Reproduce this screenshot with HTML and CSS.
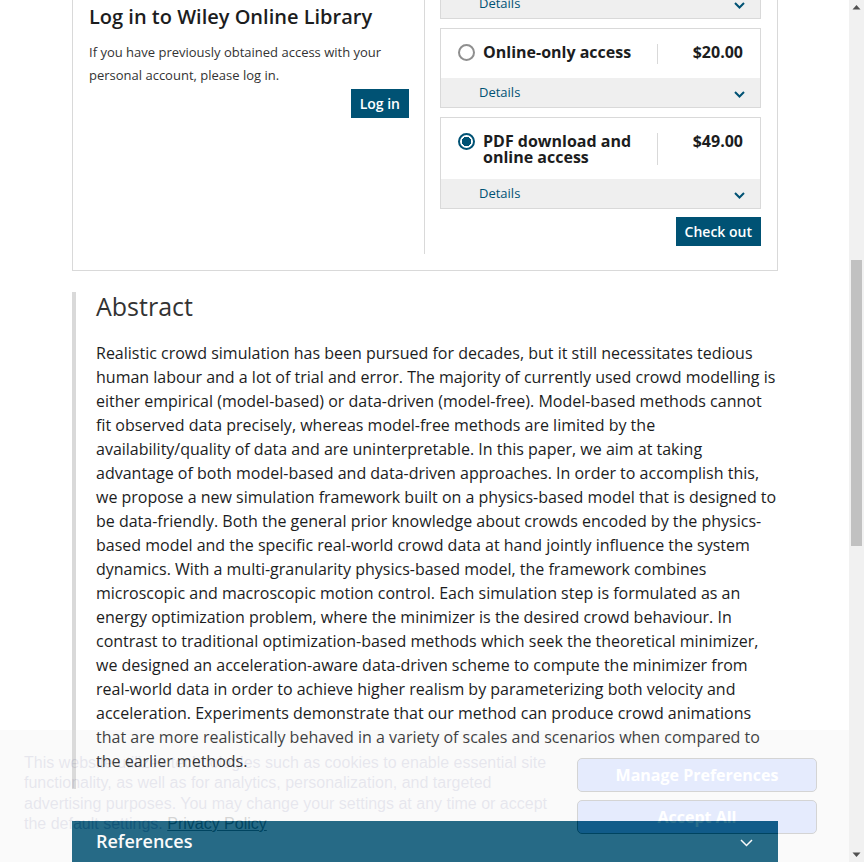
FILE: index.html
```html
<!DOCTYPE html>
<html lang="en">
<head>
<meta charset="utf-8">
<title>Wiley Online Library</title>
<link rel="stylesheet" href="styles.css">
</head>
<body>
<div class="window">
  <div class="viewport">
    <main class="main">
      <section class="access-card">
        <div class="login-col">
          <h2 class="login-title">Log in to Wiley Online Library</h2>
          <p class="login-text">If you have previously obtained access with your personal account, please log in.</p>
          <div class="actions"><button class="btn">Log in</button></div>
        </div>
        <div class="purchase-col">
          <div class="option">
            <div class="option-main">
              <span class="radio"></span>
              <span class="option-label">48-Hour online access</span>
              <span class="option-price">$12.00</span>
            </div>
            <div class="option-details">
              <span>Details</span>
              <svg class="chev" width="11" height="7" viewBox="0 0 11 7"><path d="M1 1 L5.5 5.5 L10 1" fill="none" stroke="#005274" stroke-width="2"/></svg>
            </div>
          </div>
          <div class="option">
            <div class="option-main">
              <span class="radio"></span>
              <span class="option-label">Online-only access</span>
              <span class="option-price">$20.00</span>
            </div>
            <div class="option-details">
              <span>Details</span>
              <svg class="chev" width="11" height="7" viewBox="0 0 11 7"><path d="M1 1 L5.5 5.5 L10 1" fill="none" stroke="#005274" stroke-width="2"/></svg>
            </div>
          </div>
          <div class="option">
            <div class="option-main">
              <span class="radio radio-checked"></span>
              <span class="option-label">PDF download and online access</span>
              <span class="option-price">$49.00</span>
            </div>
            <div class="option-details">
              <span>Details</span>
              <svg class="chev" width="11" height="7" viewBox="0 0 11 7"><path d="M1 1 L5.5 5.5 L10 1" fill="none" stroke="#005274" stroke-width="2"/></svg>
            </div>
          </div>
          <div class="actions checkout"><button class="btn btn-checkout">Check out</button></div>
        </div>
      </section>

      <section class="abstract">
        <h2 class="abstract-title">Abstract</h2>
        <p class="abstract-text">Realistic crowd simulation has been pursued for decades, but it still necessitates tedious human labour and a lot of trial and error. The majority of currently used crowd modelling is either empirical (model-based) or data-driven (model-free). Model-based methods cannot fit observed data precisely, whereas model-free methods are limited by the availability/quality of data and are uninterpretable. In this paper, we aim at taking advantage of both model-based and data-driven approaches. In order to accomplish this, we propose a new simulation framework built on a physics-based model that is designed to be data-friendly. Both the general prior knowledge about crowds encoded by the physics-based model and the specific real-world crowd data at hand jointly influence the system dynamics. With a multi-granularity physics-based model, the framework combines microscopic and macroscopic motion control. Each simulation step is formulated as an energy optimization problem, where the minimizer is the desired crowd behaviour. In contrast to traditional optimization-based methods which seek the theoretical minimizer, we designed an acceleration-aware data-driven scheme to compute the minimizer from real-world data in order to achieve higher realism by parameterizing both velocity and acceleration. Experiments demonstrate that our method can produce crowd animations that are more realistically behaved in a variety of scales and scenarios when compared to the earlier methods.</p>
      </section>

      <section class="references">
        <span>References</span>
        <svg class="ref-chev" width="13" height="8" viewBox="0 0 13 8"><path d="M1 1 L6.5 6.5 L12 1" fill="none" stroke="#ffffff" stroke-width="1.5"/></svg>
      </section>
    </main>
  </div>
  <div class="scrollbar">
    <div class="sb-btn"><svg width="15" height="15" viewBox="0 0 15 15"><polygon points="3.5,9.5 7.5,5 11.5,9.5" fill="#505050"/></svg></div>
    <div class="sb-track"><div class="sb-thumb" style="margin-top:245px;height:286px"></div></div>
    <div class="sb-btn"><svg width="15" height="15" viewBox="0 0 15 15"><polygon points="3.5,5.5 7.5,10 11.5,5.5" fill="#505050"/></svg></div>
  </div>
</div>

<div class="cookie-banner">
  <p class="cookie-text">This website utilizes technologies such as cookies to enable essential site functionality, as well as for analytics, personalization, and targeted advertising purposes. You may change your settings at any time or accept the default settings. <a class="cookie-link" href="#">Privacy Policy</a></p>
  <div class="cookie-actions">
    <button class="cookie-btn">Manage Preferences</button>
    <button class="cookie-btn">Accept All</button>
  </div>
</div>
</body>
</html>
```

FILE: styles.css
```css
html, body {
  margin: 0;
  padding: 0;
  height: 862px;
  overflow: hidden;
  background: #ffffff;
}

body {
  font-family: "Open Sans", "Noto Sans", sans-serif;
  color: #1c1d1e;
}

.window {
  display: flex;
  height: 862px;
}

.viewport {
  flex: 1;
  overflow: hidden;
  height: 862px;
}

.main {
  margin-top: -78px;
  padding: 0 71px 0 72px;
}

/* access card */
.access-card {
  border: 1px solid #d9d9d9;
  padding: 16px 16px 16px 16px;
  display: grid;
  grid-template-columns: 336px 1fr;
}

.login-col {
  border-right: 1px solid #d9d9d9;
  padding-right: 15px;
}

.login-title {
  margin: 64px 0 0;
  font-size: 20px;
  line-height: 28px;
  font-weight: 600;
  color: #1c1d1e;
}

.login-text {
  margin: 10px 0 0;
  font-size: 13px;
  line-height: 23px;
  color: #333333;
}

.actions {
  display: flex;
  justify-content: flex-end;
}

.login-col .actions {
  margin-top: 2px;
}

.btn {
  border: none;
  border-radius: 0;
  background: #005274;
  color: #ffffff;
  font-family: "Open Sans", sans-serif;
  font-weight: 600;
  font-size: 14px;
  height: 29px;
  padding: 0 9px;
  box-sizing: border-box;
}

.btn-checkout {
  height: 29px;
  padding: 0 9px;
}

.purchase-col {
  padding-left: 15px;
  padding-bottom: 8px;
}

.option {
  border: 1px solid #d9d9d9;
  margin-bottom: 9px;
}

.option:nth-child(3) {
  margin-bottom: 8px;
}

.option-main {
  display: flex;
  align-items: stretch;
  padding: 15px 17px 14px 17px;
  min-height: 20px;
}

.radio {
  flex: 0 0 auto;
  width: 17px;
  height: 17px;
  box-sizing: border-box;
  border: 2px solid #8f8f8f;
  border-radius: 50%;
  margin-right: 8px;
  align-self: flex-start;
  background: #ffffff;
}

.radio-checked {
  border: 2px solid #005274;
  background: radial-gradient(circle, #005274 0 4.6px, #ffffff 5px);
}

.option-label {
  flex: 1;
  font-size: 16px;
  font-weight: 700;
  line-height: 16px;
  color: #1c1d1e;
}

.option-price {
  flex: 0 0 86px;
  box-sizing: border-box;
  border-left: 1px solid #d9d9d9;
  text-align: right;
  font-size: 16px;
  font-weight: 700;
  line-height: 16px;
  min-height: 20px;
  color: #1c1d1e;
}

.option-details {
  display: flex;
  align-items: center;
  justify-content: space-between;
  height: 29px;
  box-sizing: border-box;
  padding: 0 15px 2px 38px;
  background: #efefef;
  font-size: 13px;
  color: #005274;
}

.chev {
  display: block;
  margin-top: 5px;
}

/* abstract */
.abstract {
  margin-top: 21px;
  border-left: 4px solid #d9d9d9;
  padding: 0 0 16px 20px;
}

.abstract-title {
  margin: 0;
  font-size: 25px;
  line-height: 28px;
  font-weight: 400;
  color: #333333;
}

.abstract-text {
  margin: 21px 0 0;
  font-size: 16px;
  line-height: 24px;
  color: #1c1d1e;
}

.references {
  margin-top: 32px;
  background: #005274;
  color: #ffffff;
  display: flex;
  align-items: center;
  justify-content: space-between;
  padding: 8px 25px 10px 24px;
  font-size: 18px;
  font-weight: 600;
  line-height: 24px;
}

.ref-chev {
  display: block;
  margin-top: 4px;
}

/* scrollbar */
.scrollbar {
  width: 15px;
  flex: 0 0 15px;
  background: #f1f1f1;
  display: flex;
  flex-direction: column;
}

.sb-btn {
  height: 15px;
  flex: 0 0 15px;
}

.sb-btn svg {
  display: block;
}

.sb-track {
  flex: 1;
  padding: 0 2px;
}

.sb-thumb {
  background: #c1c1c1;
}

/* cookie banner */
.cookie-banner {
  position: fixed;
  left: 0;
  bottom: 0;
  width: 849px;
  height: 132px;
  box-sizing: border-box;
  padding: 23px 32px 0 24px;
  display: flex;
  justify-content: space-between;
  background: rgb(225, 225, 225);
  opacity: 0.17;
  z-index: 10;
}

.cookie-text {
  margin: 0;
  width: 540px;
  font-family: "Liberation Sans", Arial, sans-serif;
  font-size: 16px;
  line-height: 20.3px;
  color: rgb(110, 110, 150);
}

.cookie-link {
  color: #000000;
  text-decoration: underline;
}

.cookie-actions {
  margin-top: 5px;
  display: flex;
  flex-direction: column;
  gap: 8px;
}

.cookie-btn {
  width: 240px;
  height: 34px;
  border: 1px solid #000000;
  border-radius: 5px;
  background: rgb(102, 137, 243);
  color: #ffffff;
  font-family: "Open Sans", sans-serif;
  font-weight: 700;
  font-size: 16px;
}
```
